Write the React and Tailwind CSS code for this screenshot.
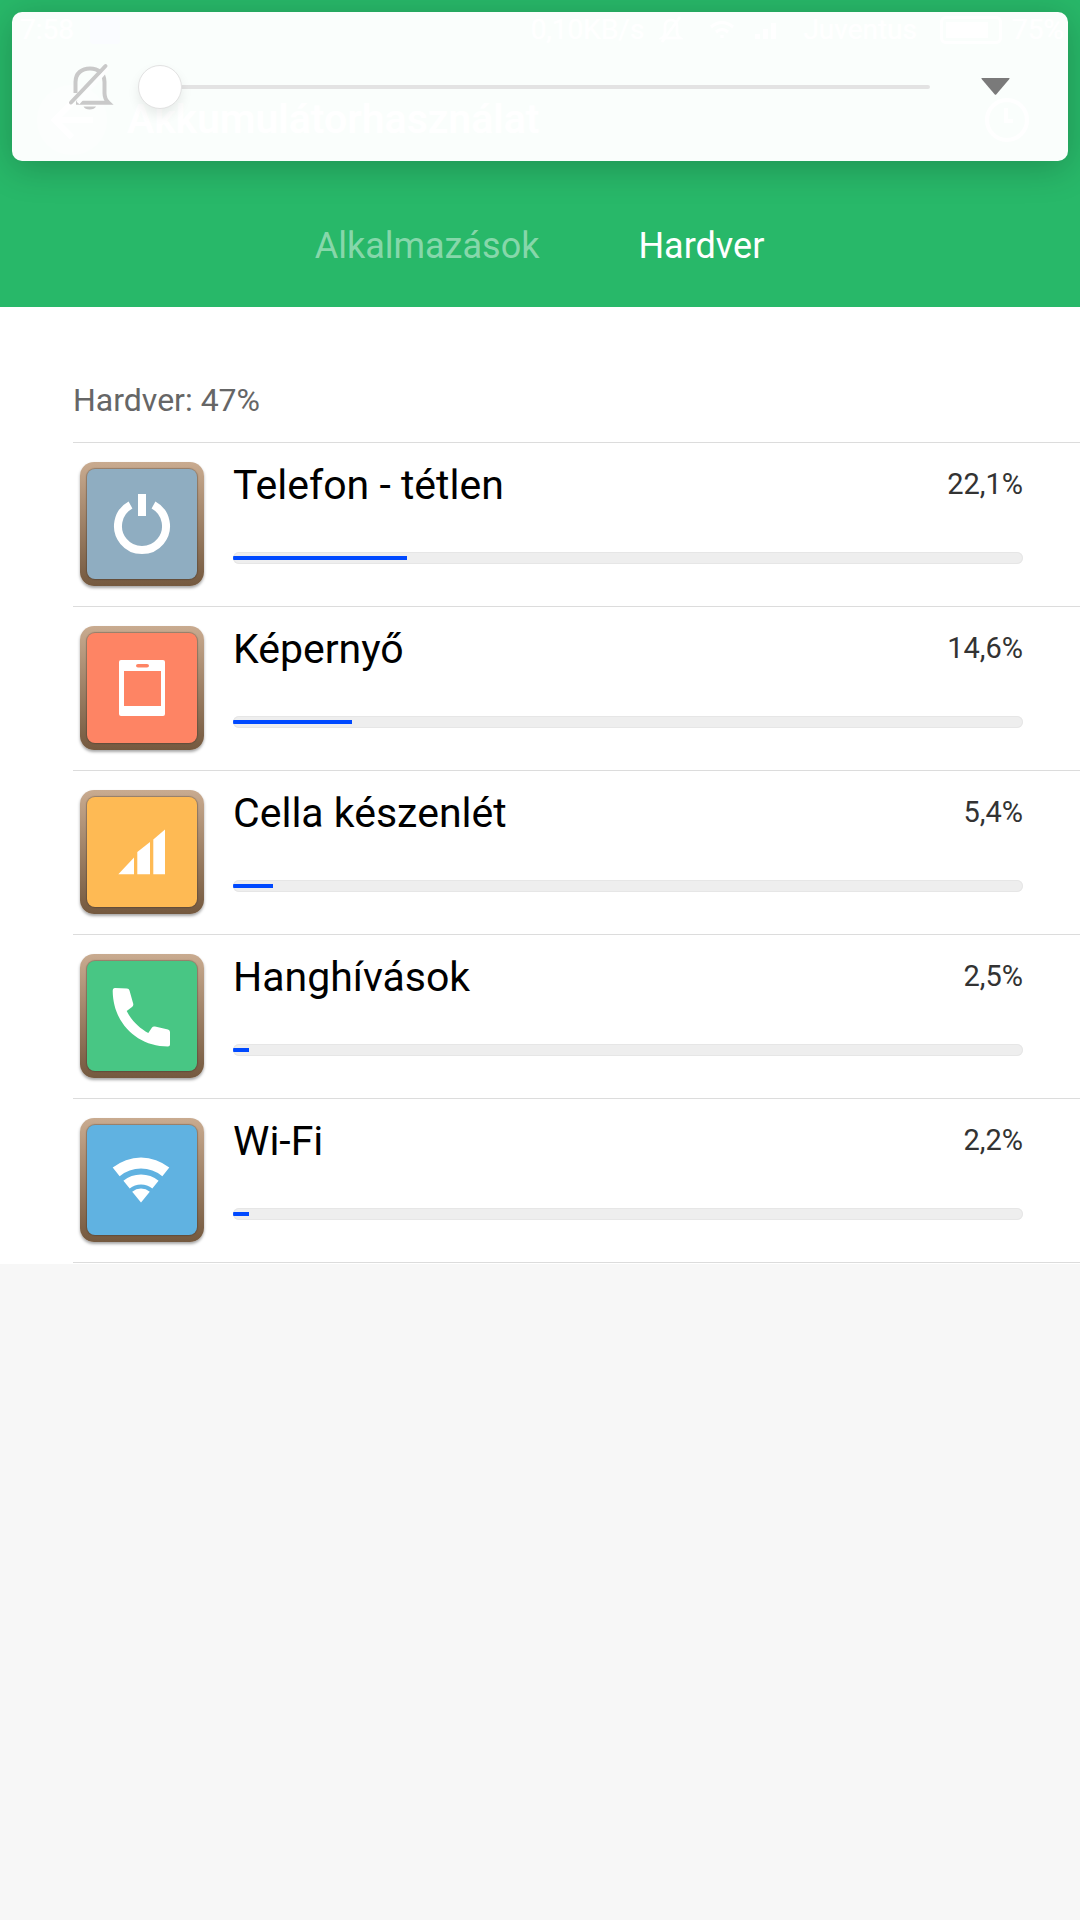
const rows = [
  { title: 'Telefon - tétlen', pct: '22,1%', bar: 174, color: 'bg-[#8fadc1]', icon: <PowerIcon /> },
  { title: 'Képernyő', pct: '14,6%', bar: 119, color: 'bg-[#fe8464]', icon: <ScreenIcon /> },
  { title: 'Cella készenlét', pct: '5,4%', bar: 40, color: 'bg-[#feba54]', icon: <SignalIcon /> },
  { title: 'Hanghívások', pct: '2,5%', bar: 16, color: 'bg-[#48c684]', icon: <PhoneIcon /> },
  { title: 'Wi-Fi', pct: '2,2%', bar: 16, color: 'bg-[#60b2e1]', icon: <WifiIcon /> },
]

function PowerIcon() {
  return (
    <svg viewBox="0 0 110 110" className="w-full h-full">
      <path d="M43.5 36A24 24 0 1 0 66.5 36" fill="none" stroke="#fff" strokeWidth="8" />
      <rect x="51" y="25" width="8" height="22" fill="#fff" />
    </svg>
  )
}

function ScreenIcon() {
  return (
    <svg viewBox="0 0 110 110" className="w-full h-full">
      <path
        fillRule="evenodd"
        fill="#fff"
        d="M34 27H76Q78 27 78 29V81Q78 83 76 83H34Q32 83 32 81V29Q32 27 34 27ZM37 38V73H74V38ZM51 31Q49 31 49 32.8T51 34.6H60Q62 34.6 62 32.8T60 31Z"
      />
    </svg>
  )
}

function SignalIcon() {
  return (
    <svg viewBox="0 0 110 110" className="w-full h-full" fill="#fff">
      <polygon points="31.3,77.3 47,60.6 47,77.3" />
      <polygon points="50.3,77.3 50.3,55 63,45 63,77.3" />
      <polygon points="66.3,77.3 66.3,42.6 78,32.6 78,77.3" />
    </svg>
  )
}

function PhoneIcon() {
  return (
    <svg viewBox="0 0 110 110" className="w-full h-full">
      <path
        fill="#fff"
        d="M28 27L40 27.5Q42 27.5 42.5 29.5L46.3 43Q46.5 45 45 46L39.7 50C44 59 52 67 61.3 72L65 66.5Q66 65 68 65.5L81 68.5Q83 69 83 71V83.5Q83 85.5 81 85.5C50 85.5 26 62 25.7 30Q25.7 27 28 27Z"
      />
    </svg>
  )
}

function WifiIcon() {
  return (
    <svg viewBox="0 0 110 110" className="w-full h-full" fill="#fff">
      <path d="M25.7 42.6A45 45 0 0 1 82.3 42.6L75.35 51.15A34 34 0 0 0 32.65 51.15Z" />
      <path d="M36.4 55.8A28 28 0 0 1 71.6 55.8L65.3 63.6A18 18 0 0 0 42.7 63.6Z" />
      <path d="M45.2 66.7A14 14 0 0 1 62.8 66.7L54 77.6Z" />
    </svg>
  )
}

function MutedBell() {
  return (
    <svg viewBox="0 0 48 48" className="w-12 h-12" fill="none" stroke="#c9c9c9" strokeWidth="4">
      <path d="M10 39.7H42.5Q38.5 36 38.5 30V19C38.5 10 32 5.5 24 5.5C16 5.5 9.5 10 9.5 19V30" />
      <path d="M42 5L12 40" stroke="#fdfefe" strokeWidth="4" />
      <path d="M39.5 3L5 39.5" strokeLinecap="round" />
      <path d="M17.5 43.5H30Q28.5 46.5 23.7 46.5T17.5 43.5Z" fill="#c9c9c9" stroke="none" />
    </svg>
  )
}

function StatusBar() {
  return (
    <div className="h-[60px] flex items-center justify-between pl-[20px] pr-[16px] text-[28px]">
      <div className="flex items-center gap-[16px]">
        <span>7:58</span>
        <span className="w-[30px] h-[28px] rounded bg-[#2a5cff]" />
      </div>
      <div className="flex items-center">
        <span>0,10KB/s</span>
        <svg viewBox="0 0 24 28" className="ml-[15px] w-6 h-7" fill="none" stroke="#fff" strokeWidth="2.5">
          <path d="M3 22H21Q18 20 18 16V10C18 6 15 4 12 4S6 6 6 10V16Q6 20 3 22ZM21 1L3 26" />
        </svg>
        <svg viewBox="0 0 24 20" className="ml-[27px] w-6 h-5" fill="none" stroke="#fff" strokeWidth="3">
          <path d="M1 7Q12 -2 23 7M6 12Q12 7 18 12M12 18V15" />
        </svg>
        <svg viewBox="0 0 24 20" className="ml-[20px] w-6 h-5" fill="#fff">
          <rect x="1" y="14" width="5" height="5" />
          <rect x="9" y="9" width="5" height="10" />
          <rect x="17" y="3" width="5" height="16" />
        </svg>
        <span className="ml-[25px]">Juventus</span>
        <span className="ml-[23px] w-[62px] h-[28px] rounded-md border-[3px] border-white p-[3px]">
          <span className="block w-[42px] h-full bg-white" />
        </span>
        <span className="ml-[10px]">75%</span>
      </div>
    </div>
  )
}

function Toolbar() {
  return (
    <div className="h-[120px] flex items-center pl-[37px] pr-[51px]">
      <div className="w-[70px] h-[70px] rounded-full bg-white/30 flex items-center justify-center">
        <svg viewBox="0 0 48 48" className="w-[46px] h-[46px]" fill="none" stroke="#fff" strokeWidth="6">
          <path d="M46 24H6M24 6L6 24L24 42" />
        </svg>
      </div>
      <span className="ml-[20px] flex-auto text-[41px] font-medium">Akkumulátorhasználat</span>
      <svg viewBox="0 0 44 44" className="w-11 h-11" fill="none" stroke="#fff" strokeWidth="4">
        <circle cx="22" cy="22" r="20" />
        <path d="M21 10V23H28" />
      </svg>
    </div>
  )
}

function VolumeCard() {
  return (
    <div className="absolute left-3 top-3 w-[1056px] h-[149px] rounded-[10px] bg-white/[0.98] shadow-[0_6px_36px_rgba(0,0,0,0.22)] flex items-center pl-[54px] pr-[58px]">
      <MutedBell />
      <div className="relative flex-auto ml-[24px] mr-[51px] h-[44px] flex items-center">
        <div className="w-full h-1 bg-[#e3e3e3] rounded-full" />
        <div className="absolute left-0 top-0 w-11 h-11 rounded-full bg-white border border-[#e2e2e2] shadow-[0_6px_12px_rgba(0,0,0,0.08)]" />
      </div>
      <svg viewBox="0 0 29 17" className="w-[29px] h-[17px]">
        <path d="M1 0H28Q29 0 28.4 1L15.2 16.4Q14.5 17 13.8 16.4L0.6 1Q0 0 1 0Z" fill="#7a7a7a" />
      </svg>
    </div>
  )
}

function Header() {
  return (
    <div className="relative bg-[#28b869] h-[307px] text-white font-['Roboto',sans-serif]">
      <StatusBar />
      <Toolbar />
      <div className="mt-[36px] flex justify-center gap-[99px] text-[36px] leading-[60px]">
        <span className="text-white/45 ml-[-1px]">Alkalmazások</span>
        <span>Hardver</span>
      </div>
      <VolumeCard />
    </div>
  )
}

function UsageRow({ row }) {
  return (
    <div className="h-[164px] border-b border-[#dcdcdc] flex pl-[7px]">
      <div className="mt-[19px] w-[124px] h-[124px] p-[7px] rounded-[14px] bg-gradient-to-b from-[#c9ab90] to-[#74593f] shadow-[0_2px_3px_rgba(0,0,0,0.35)]">
        <div className={`w-full h-full rounded-[8px] shadow-[0_0_1px_1px_rgba(60,50,40,0.35)] ${row.color}`}>
          {row.icon}
        </div>
      </div>
      <div className="ml-[29px] w-[790px]">
        <div className="flex justify-between h-[109px]">
          <span className="text-[41px] leading-[48px] mt-[18px] text-black">{row.title}</span>
          <span className="text-[29px] leading-[34px] mt-[24px] text-[#333]">{row.pct}</span>
        </div>
        <div className="h-3 rounded-full bg-[#eeeeee] shadow-[inset_0_0_0_1px_#e6e6e6] flex items-center overflow-hidden">
          <div className="h-1 bg-[#0049ff]" style={{ width: row.bar }} />
        </div>
      </div>
    </div>
  )
}

export default function App() {
  return (
    <div className="w-[1080px] h-[1920px] bg-[#f7f7f7] font-['Roboto',sans-serif] overflow-hidden">
      <Header />
      <div className="bg-white pl-[73px] h-[957px]">
        <div className="h-[136px] border-b border-[#dcdcdc] flex items-end pb-[24px] text-[32px] leading-[36px] text-[#666]">
          Hardver: 47%
        </div>
        {rows.map(row => (
          <UsageRow key={row.title} row={row} />
        ))}
      </div>
    </div>
  )
}
